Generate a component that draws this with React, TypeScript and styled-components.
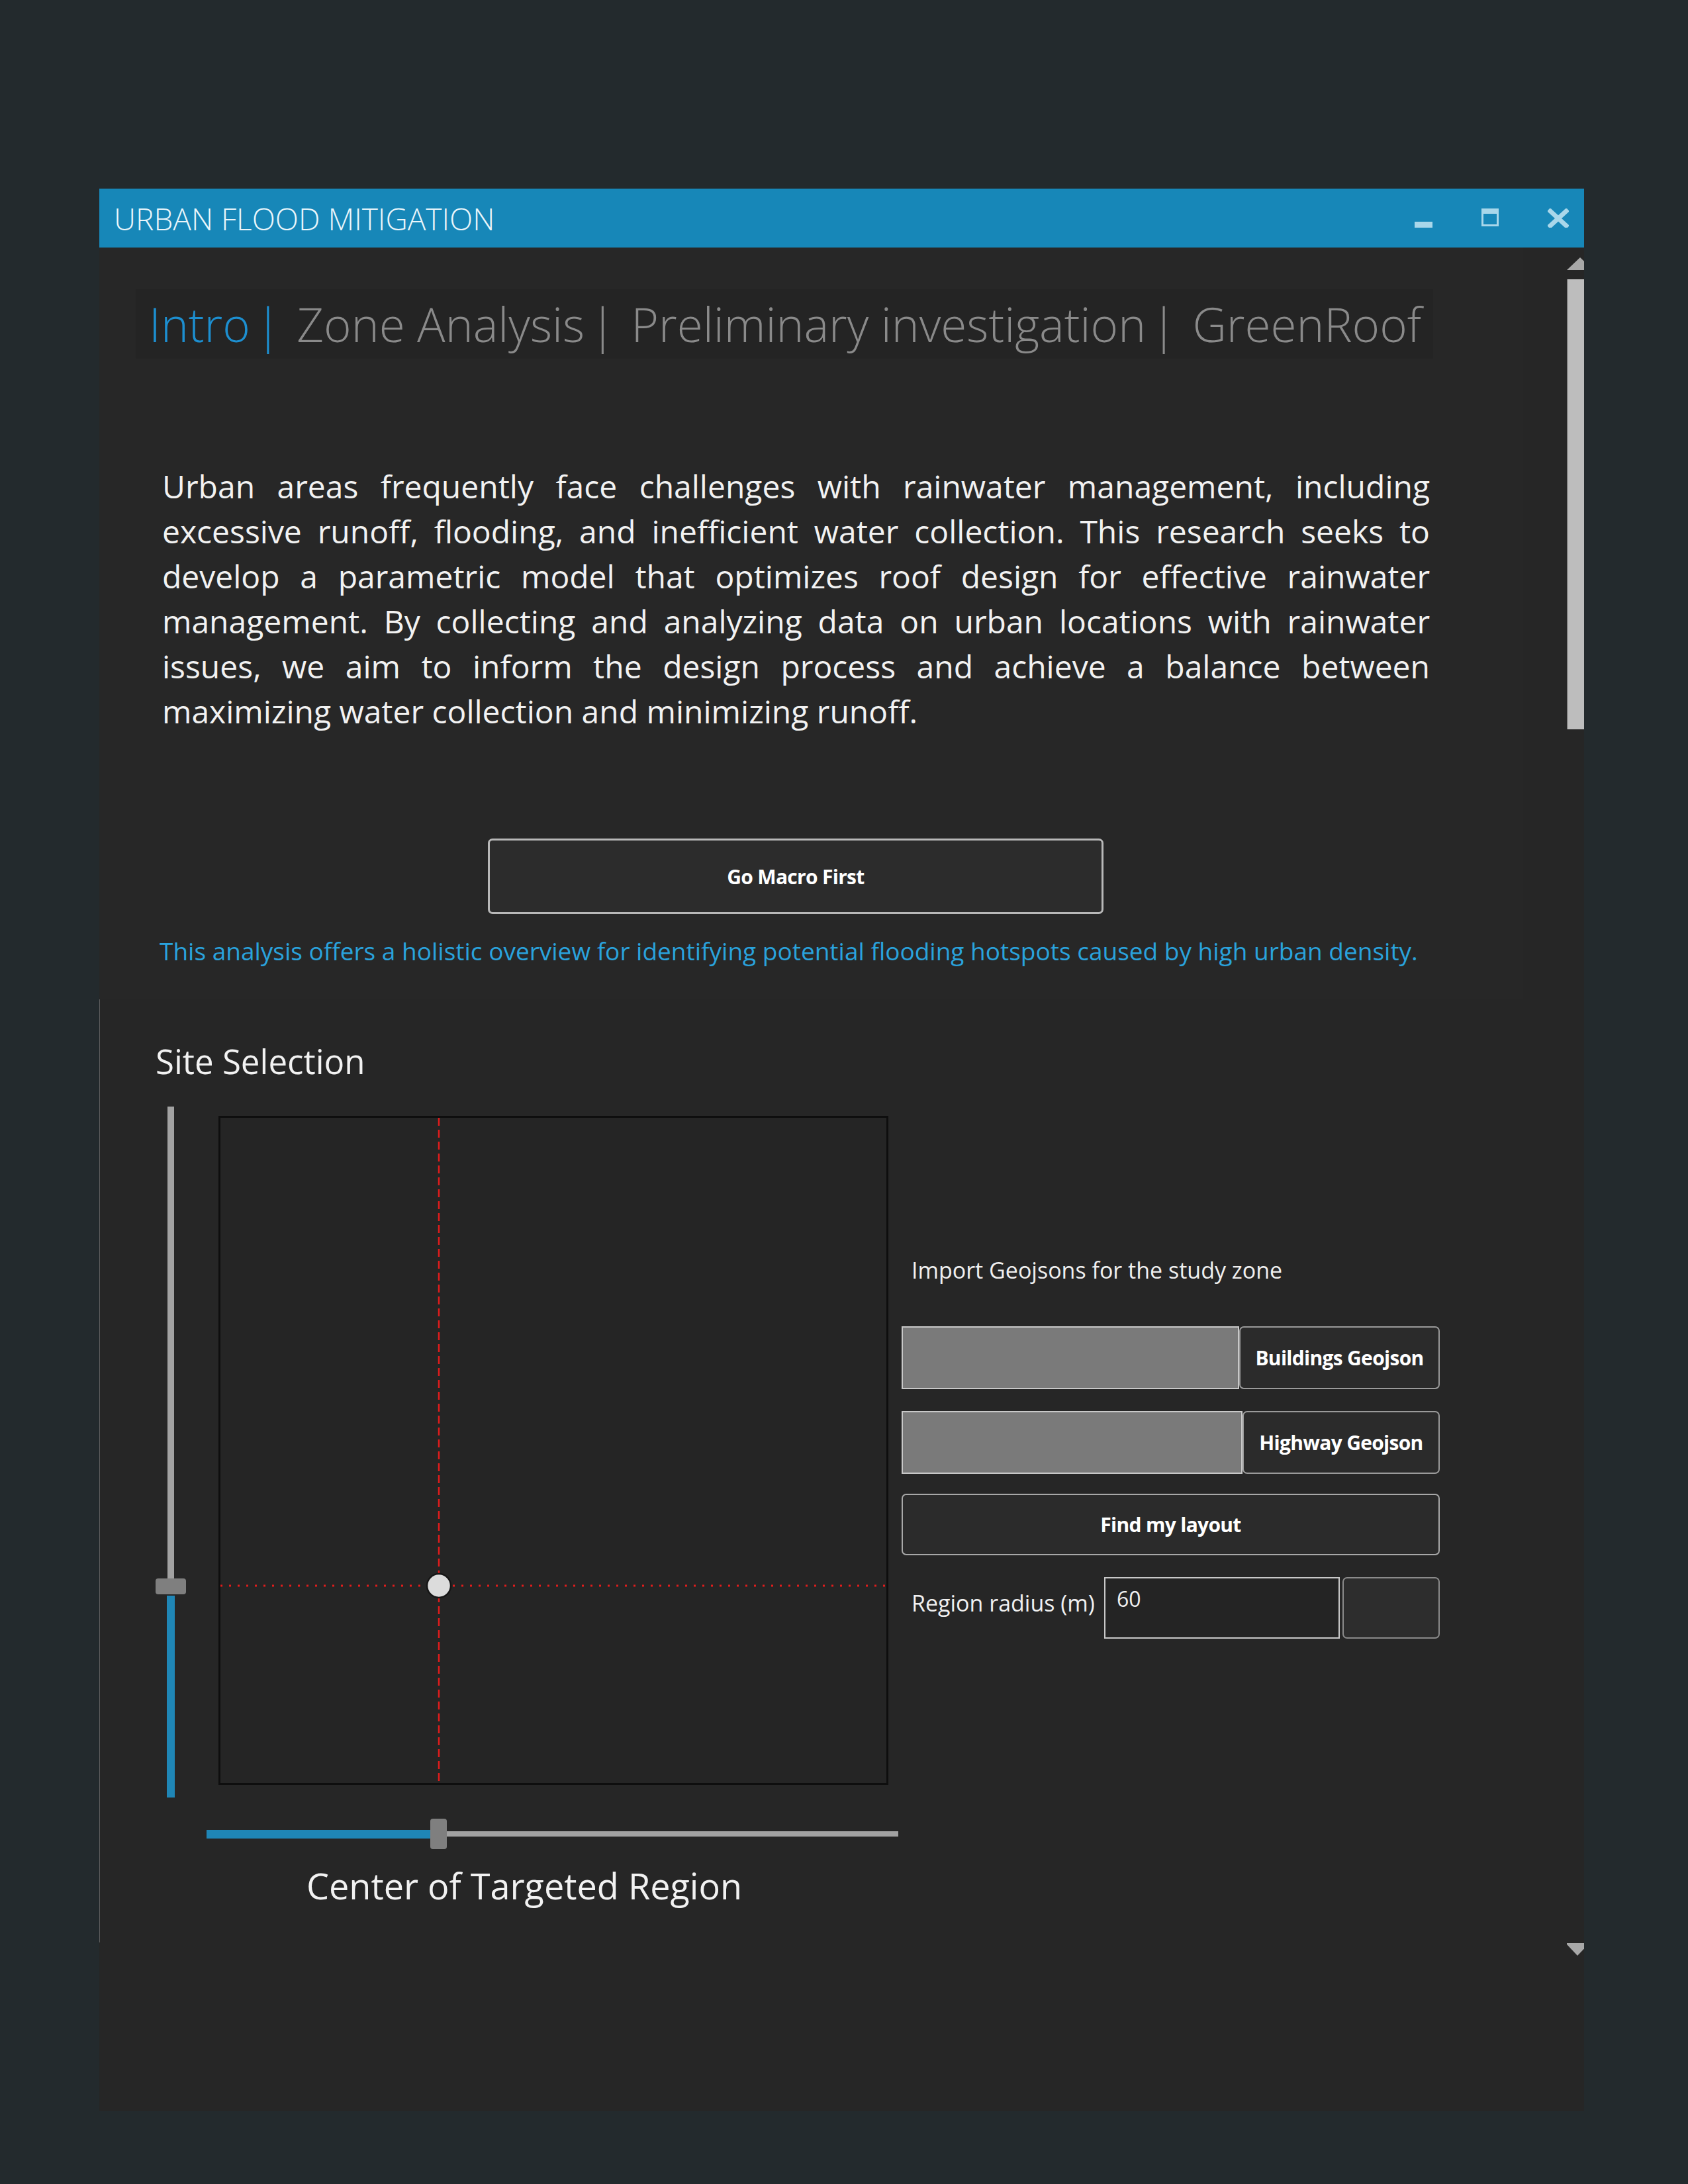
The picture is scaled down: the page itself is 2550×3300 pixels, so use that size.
import React from "react";
import styled, { createGlobalStyle } from "styled-components";

const GlobalStyle = createGlobalStyle`
  html, body { margin: 0; padding: 0; background: #232a2d; }
  body { width: 2550px; height: 3300px; font-family: "Open Sans", "Noto Sans", sans-serif; }
  * { box-sizing: border-box; }
`;

const Page = styled.div`
  width: 2550px;
  height: 3300px;
  padding: 285px 0 0 150px;
  background: #232a2d;
`;

const Window = styled.div`
  width: 2243px;
  height: 2905px;
  display: flex;
  flex-direction: column;
  background: #262626;
`;

const TitleBar = styled.div`
  height: 89px;
  flex: none;
  background: #1787b8;
  display: flex;
  align-items: center;
  justify-content: space-between;
  padding: 0 23px 0 22px;
`;

const Title = styled.div`
  font-size: 46px;
  font-weight: 300;
  color: #eaf6fb;
  white-space: nowrap;
`;

const Controls = styled.div`
  display: flex;
  align-items: flex-end;
  gap: 74px;
  height: 29px;
`;

const Body = styled.div`
  flex: 1;
  min-height: 0;
  display: flex;
`;

const Content = styled.div`
  flex: 1;
  display: flex;
  flex-direction: column;
  overflow: hidden;
`;

const Scrollbar = styled.div`
  width: 26px;
  flex: none;
  display: flex;
  flex-direction: column;
  overflow: hidden;
  padding-bottom: 234px;
`;

const ScrollThumb = styled.div`
  margin-top: 14px;
  height: 680px;
  width: 26px;
  flex: none;
  background: #bdbdbd;
  border-left: 2px solid #8e8e8e;
`;

const ScrollSpacer = styled.div`
  flex: 1;
`;

const IntroPanel = styled.div`
  width: 2151px;
  height: 1136px;
  flex: none;
  background: #272727;
  display: flex;
  flex-direction: column;
  align-items: flex-start;
`;

const TabsBox = styled.div`
  margin: 63px 0 0 55px;
  width: 1960px;
  height: 105px;
  background: #242424;
  display: flex;
  align-items: center;
  padding-left: 20px;
  line-height: 105px;
  font-size: 71px;
  font-weight: 300;
  white-space: nowrap;
`;

const Tab = styled.span<{ $active?: boolean }>`
  color: ${(p) => (p.$active ? "#1d8fd0" : "#8a8a8a")};
`;

const Sep = styled.span<{ $active?: boolean }>`
  color: ${(p) => (p.$active ? "#1d8fd0" : "#8a8a8a")};
  margin: 0 24px 0 8px;
`;

const Paragraph = styled.div`
  margin: 159px 0 0 95px;
  width: 1915px;
  font-size: 48px;
  line-height: 68px;
  color: #f2f2f2;
`;

const Line = styled.div<{ $last?: boolean }>`
  white-space: nowrap;
  text-align: ${(p) => (p.$last ? "left" : "justify")};
  text-align-last: ${(p) => (p.$last ? "left" : "justify")};
`;

const GoButton = styled.button`
  margin: 158px 0 0 587px;
  width: 930px;
  height: 114px;
  border: 3px solid #b8b8b8;
  border-radius: 7px;
  background: #2c2c2c;
  color: #ffffff;
  font-family: "Open Sans", sans-serif;
  font-weight: 700;
  font-size: 30px;
  letter-spacing: -0.7px;
  padding: 0;
`;

const BlueNote = styled.div`
  margin: 30px 0 0 91px;
  font-size: 37px;
  color: #2aa3dd;
  white-space: nowrap;
`;

const SitePanel = styled.div`
  height: 1425px;
  flex: none;
  border-left: 1px solid #5e5e5e;
  padding-left: 84px;
  display: flex;
  flex-direction: column;
  align-items: flex-start;
`;

const SiteTitle = styled.div`
  margin-top: 58px;
  font-size: 51px;
  color: #f2f2f2;
  white-space: nowrap;
`;

const SiteRow = styled.div`
  margin-top: 34px;
  display: flex;
  align-items: flex-start;
`;

const LeftCol = styled.div`
  display: flex;
  flex-direction: column;
  align-items: flex-start;
`;

const MapRow = styled.div`
  display: flex;
  align-items: flex-start;
`;

const VSlider = styled.div`
  width: 46px;
  height: 1044px;
  display: flex;
  flex-direction: column;
  align-items: center;
`;

const VTrack = styled.div<{ $fill?: boolean }>`
  width: ${(p) => (p.$fill ? 12 : 10)}px;
  background: ${(p) => (p.$fill ? "#1f86b6" : "#a2a2a2")};
`;

const VThumb = styled.div`
  width: 46px;
  height: 24px;
  flex: none;
  border-radius: 4px;
  background: #7f7f7f;
  margin: 0 0 2px;
`;

const Canvas = styled.div`
  margin: 14px 0 0 49px;
  width: 1012px;
  height: 1011px;
  border: 3px solid #0e0e0e;
  background: #252525;
`;

const HSlider = styled.div`
  margin: 32px 0 0 77px;
  height: 46px;
  display: flex;
  align-items: center;
`;

const HTrack = styled.div<{ $fill?: boolean }>`
  height: ${(p) => (p.$fill ? 13 : 8)}px;
  background: ${(p) => (p.$fill ? "#1f86b6" : "#a2a2a2")};
`;

const HThumb = styled.div`
  width: 25px;
  height: 46px;
  border-radius: 4px;
  background: #7f7f7f;
`;

const CenterLabel = styled.div`
  margin: 18px 0 0 228px;
  font-size: 54px;
  color: #f2f2f2;
  white-space: nowrap;
`;

const RightCol = styled.div`
  margin: 224px 0 0 5px;
  width: 813px;
  display: flex;
  flex-direction: column;
`;

const SmallLabel = styled.div`
  font-size: 34px;
  color: #f0f0f0;
  white-space: nowrap;
`;

const ImportLabel = styled(SmallLabel)`
  padding-left: 15px;
  margin-bottom: 62px;
`;

const FileRow = styled.div<{ $gap?: number }>`
  display: flex;
  height: 95px;
  margin-bottom: ${(p) => p.$gap ?? 33}px;
`;

const FileField = styled.div<{ $w: number }>`
  width: ${(p) => p.$w}px;
  flex: none;
  background: #7a7a7a;
  border: 2px solid #c8c8c8;
`;

const ActionButton = styled.button`
  flex: 1;
  border: 2px solid #9a9a9a;
  border-radius: 7px;
  background: #2b2b2b;
  color: #ffffff;
  font-family: "Open Sans", sans-serif;
  font-weight: 700;
  font-size: 30px;
  letter-spacing: -0.7px;
  padding: 0;
`;

const FindButton = styled(ActionButton)`
  flex: none;
  width: 813px;
  height: 93px;
  margin-bottom: 33px;
  border-color: #a8a8a8;
`;

const RadiusRow = styled.div`
  display: flex;
  align-items: center;
  height: 93px;
`;

const RadiusLabel = styled(SmallLabel)`
  padding-left: 15px;
  width: 306px;
  flex: none;
  margin-top: -16px;
`;

const RadiusInput = styled.div`
  width: 356px;
  height: 93px;
  flex: none;
  border: 2px solid #c8c8c8;
  background: #242424;
  color: #f0f0f0;
  font-size: 32px;
  padding: 9px 17px;
  line-height: 44px;
`;

const SpinButton = styled.div`
  margin-left: 4px;
  flex: 1;
  height: 93px;
  border: 2px solid #8a8a8a;
  border-radius: 7px;
  background: #2d2d2d;
`;

const lines = [
  "Urban areas frequently face challenges with rainwater management, including",
  "excessive runoff, flooding, and inefficient water collection. This research seeks to",
  "develop a parametric model that optimizes roof design for effective rainwater",
  "management. By collecting and analyzing data on urban locations with rainwater",
  "issues, we aim to inform the design process and achieve a balance between",
  "maximizing water collection and minimizing runoff.",
];

const iconColor = "#a9d7ea";

export default function App() {
  return (
    <>
      <GlobalStyle />
      <Page>
        <Window>
          <TitleBar>
            <Title>URBAN FLOOD MITIGATION</Title>
            <Controls>
              <svg width="27" height="29" viewBox="0 0 27 29">
                <rect x="0" y="20" width="27" height="9" fill={iconColor} />
              </svg>
              <svg width="26" height="29" viewBox="0 0 26 29">
                <rect x="0" y="0" width="26" height="27" fill={iconColor} />
                <rect x="3" y="8" width="20" height="16" fill="#1787b8" />
              </svg>
              <svg width="32" height="29" viewBox="0 0 32 29">
                <path d="M4 4 L28 26 M28 4 L4 26" stroke={iconColor} strokeWidth="7" strokeLinecap="square" />
              </svg>
            </Controls>
          </TitleBar>
          <Body>
            <Content>
              <IntroPanel>
                <TabsBox>
                  <Tab $active>Intro</Tab>
                  <Sep $active>|</Sep>
                  <Tab>Zone Analysis</Tab>
                  <Sep>|</Sep>
                  <Tab>Preliminary investigation</Tab>
                  <Sep>|</Sep>
                  <Tab>GreenRoof</Tab>
                </TabsBox>
                <Paragraph>
                  {lines.map((l, i) => (
                    <Line key={i} $last={i === lines.length - 1}>
                      {l}
                    </Line>
                  ))}
                </Paragraph>
                <GoButton>Go Macro First</GoButton>
                <BlueNote>
                  This analysis offers a holistic overview for identifying potential flooding hotspots caused by high urban density.
                </BlueNote>
              </IntroPanel>
              <SitePanel>
                <SiteTitle>Site Selection</SiteTitle>
                <SiteRow>
                  <LeftCol>
                    <MapRow>
                      <VSlider>
                        <VTrack style={{ height: 713 }} />
                        <VThumb />
                        <VTrack $fill style={{ height: 305 }} />
                      </VSlider>
                      <Canvas>
                        <svg width="1006" height="1005" viewBox="0 0 1006 1005">
                          <line x1="330" y1="0" x2="330" y2="1005" stroke="#e01c1c" strokeWidth="2.5" strokeDasharray="12 6" />
                          <line x1="0" y1="707" x2="1006" y2="707" stroke="#e01c1c" strokeWidth="3" strokeDasharray="3 10" />
                          <ellipse cx="330" cy="707" rx="18" ry="18" fill="#dcdcdc" stroke="#161616" strokeWidth="2.5" />
                        </svg>
                      </Canvas>
                    </MapRow>
                    <HSlider>
                      <HTrack $fill style={{ width: 338 }} />
                      <HThumb />
                      <HTrack style={{ width: 682 }} />
                    </HSlider>
                    <CenterLabel>Center of Targeted Region</CenterLabel>
                  </LeftCol>
                  <RightCol>
                    <ImportLabel>Import Geojsons for the study zone</ImportLabel>
                    <FileRow>
                      <FileField $w={510} />
                      <ActionButton>Buildings Geojson</ActionButton>
                    </FileRow>
                    <FileRow $gap={30}>
                      <FileField $w={515} />
                      <ActionButton>Highway Geojson</ActionButton>
                    </FileRow>
                    <FindButton>Find my layout</FindButton>
                    <RadiusRow>
                      <RadiusLabel>Region radius (m)</RadiusLabel>
                      <RadiusInput>60</RadiusInput>
                      <SpinButton />
                    </RadiusRow>
                  </RightCol>
                </SiteRow>
              </SitePanel>
            </Content>
            <Scrollbar>
              <svg width="26" height="34" viewBox="0 0 26 34" style={{ flex: "none" }}>
                <polygon points="0,34 20,15 40,34" fill="#a8a8a8" />
              </svg>
              <ScrollThumb />
              <ScrollSpacer />
              <svg width="26" height="20" viewBox="0 0 26 20" style={{ flex: "none" }}>
                <polygon points="-2,0 34,0 16,19" fill="#a8a8a8" />
              </svg>
            </Scrollbar>
          </Body>
        </Window>
      </Page>
    </>
  );
}
